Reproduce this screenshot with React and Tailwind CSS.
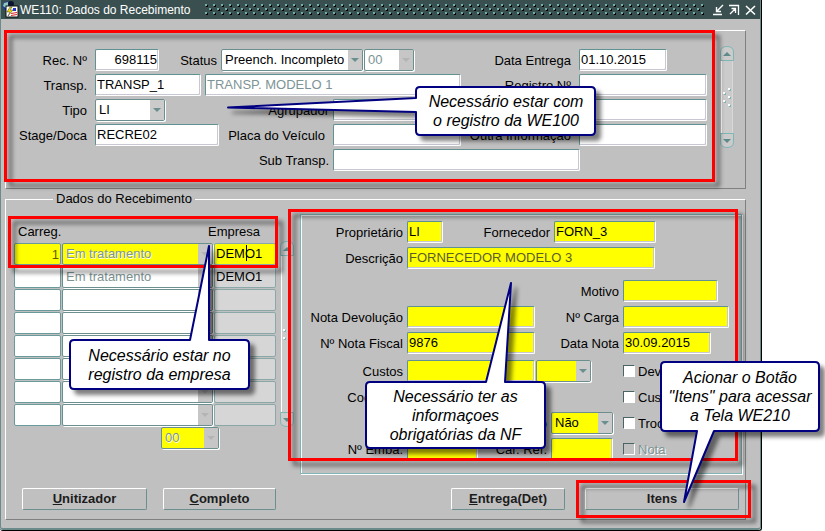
import React from "react";
import clsx from "clsx";

const loads = [
  { load: "1", status: "Em tratamento", company: "DEMO1", active: true },
  { load: "", status: "Em tratamento", company: "DEMO1" },
  { load: "", status: "", company: "" },
  { load: "", status: "", company: "" },
  { load: "", status: "", company: "" },
  { load: "", status: "", company: "" },
  { load: "", status: "", company: "" },
  { load: "", status: "", company: "" },
];

const edge = "border border-t-[#5f9290] border-l-[#5f9290] border-b-white border-r-white rounded-[2px]";

function Field({ id, label, labelClass, className, yellow, value = "", readOnly, muted, tight }) {
  return (
    <>
      {label && (
        <label
          htmlFor={id}
          className={clsx("shrink-0 pt-1 text-right whitespace-nowrap", tight ? "pr-1" : "pr-2", labelClass)}
        >
          {label}
        </label>
      )}
      <input
        id={id}
        aria-label={label ? undefined : id}
        defaultValue={value}
        readOnly={readOnly}
        className={clsx(
          "h-[22px] shrink-0 px-px pb-0.5 shadow-[inset_-1px_-1px_0_#c8c8d4] outline-none",
          edge,
          yellow ? "bg-[#ffff00]" : "bg-white",
          muted,
          className
        )}
      />
    </>
  );
}

function Select({ id, label, labelClass, className, bg = "bg-white", value, disabled, flat }) {
  return (
    <>
      {label && (
        <label htmlFor={id} className={clsx("shrink-0 pt-1 text-right whitespace-nowrap", labelClass)}>
          {label}
        </label>
      )}
      <span className={clsx("relative block h-[22px] shrink-0", className)}>
        <select
          id={id}
          aria-label={label ? undefined : id}
          disabled={disabled}
          defaultValue={value}
          className={clsx(
            "block h-full w-full appearance-none rounded-[2px] border border-[#6b8f8f] pl-[3px] opacity-100 shadow-[1px_1px_0_#fff] outline-none",
            bg,
            disabled && "text-[#7d9494] [text-shadow:1px_1px_0_#fff]"
          )}
        >
          <option>{value}</option>
        </select>
        <span
          className={clsx(
            "pointer-events-none absolute top-px right-px bottom-px flex w-[14px] items-center justify-center",
            flat ? "bg-[#c6c6c6]" : "bg-[#cbcbcb]"
          )}
        >
          <svg width="8" height="4" viewBox="0 0 8 4" className={disabled ? "fill-[#b4b4b4]" : "fill-[#6b8f8f]"}>
            <path d="M0 0H8L4 4Z" />
          </svg>
        </span>
      </span>
    </>
  );
}

function Check({ id, label, disabled }) {
  return (
    <span className="flex items-center gap-[3px] pl-1">
      <input
        id={id}
        type="checkbox"
        disabled={disabled}
        className={clsx(
          "size-3 shrink-0 appearance-none border border-t-[#4a6464] border-l-[#4a6464] border-b-white border-r-white",
          disabled ? "bg-[#c0c0c0]" : "bg-white"
        )}
      />
      <label htmlFor={id} className={clsx("pt-0.5", disabled && "text-[#7d9494] [text-shadow:1px_1px_0_#fff]")}>
        {label}
      </label>
    </span>
  );
}

function ScrollBar({ className }) {
  return (
    <div className={clsx("flex w-[14px] shrink-0 flex-col", className)}>
      <svg width="14" height="15" viewBox="0 0 14 15" fill="none">
        <path d="M.5 14.5V6Q.5 .5 7 .5T13.5 6V14.5Z" fill="#cbcbcb" stroke="#7fb5b5" />
        <path d="M3 10H11L7 6Z" fill="#5f8a8a" />
      </svg>
      <div className="mx-px flex flex-1 items-center justify-center border-x border-l-white border-r-[#d8d8d8] bg-[#cbcbcb]">
        <svg width="8" height="19" viewBox="0 0 8 19">
          {[[5, 0], [0, 4], [5, 8], [0, 12], [5, 16]].map(([x, y]) => (
            <g key={y}>
              <rect x={x + 1} y={y + 1} width="2" height="2" fill="#7fb5b5" />
              <rect x={x} y={y} width="2" height="2" fill="#fff" />
            </g>
          ))}
        </svg>
      </div>
      <svg width="14" height="15" viewBox="0 0 14 15" fill="none">
        <path d="M.5 .5V9Q.5 14.5 7 14.5T13.5 9V.5Z" fill="#cbcbcb" stroke="#7fb5b5" />
        <path d="M3 6H11L7 10Z" fill="#5f8a8a" />
      </svg>
    </div>
  );
}

function Button({ children, className }) {
  return (
    <button
      type="button"
      className={clsx(
        "h-[22px] shrink-0 rounded-[2px] border border-t-white border-l-white border-b-[#6b8f8f] border-r-[#6b8f8f] bg-[#c0c0c0] font-bold text-[#1c1c1c]",
        className
      )}
    >
      {children}
    </button>
  );
}

function TitleBar() {
  return (
    <header className="flex h-[19px] items-center bg-[#3a5050] pr-1 pl-px text-white">
      <svg width="17" height="17" viewBox="0 0 17 17" className="shrink-0">
        <circle cx="5" cy="5" r="4.5" fill="#1d3f9a" />
        <path d="M2 2L6 1L7 4L4 7L1 5Z" fill="#8fc8c0" />
        <circle cx="9" cy="3" r="3" fill="#0b1330" />
        <rect x="4" y="5" width="12" height="11" fill="#fff" stroke="#111" />
        <path d="M8 6L5 11H8L6 15L11 9H8L10 6Z" fill="#f4e400" stroke="#333" strokeWidth=".5" />
        <path d="M11 7H14V10H11Z" fill="#2237c8" />
        <path d="M9 12L15 11V14L9 15Z" fill="#d22" />
        <path d="M9 13.5L15 12.5" stroke="#fff" />
      </svg>
      <h1 className="pl-px text-[12px] whitespace-nowrap">WE110: Dados do Recebimento</h1>
      <svg className="ml-[14px] h-3 min-w-0 flex-1">
        <defs>
          <pattern id="grip" width="8" height="8" patternUnits="userSpaceOnUse">
            <rect x="1" y="1" width="2" height="2" fill="#000" />
            <rect x="0" y="0" width="2" height="2" fill="#6fb0ac" />
            <rect x="5" y="5" width="2" height="2" fill="#000" />
            <rect x="4" y="4" width="2" height="2" fill="#6fb0ac" />
          </pattern>
        </defs>
        <rect width="100%" height="100%" fill="url(#grip)" />
      </svg>
      <div className="ml-2 flex shrink-0 gap-1">
        <button type="button" aria-label="Minimizar">
          <svg width="12" height="12" viewBox="0 0 12 12" fill="none" stroke="#fff">
            <path d="M11 1L5 7M4.5 3V7.5H9M1 10.5H10" strokeWidth="1.4" />
          </svg>
        </button>
        <button type="button" aria-label="Maximizar">
          <svg width="12" height="12" viewBox="0 0 12 12" fill="none" stroke="#fff">
            <path d="M1 1.5H10.5V11M2 10L7.5 4.5M3.5 4.5H7.5V9" strokeWidth="1.3" />
          </svg>
        </button>
        <button type="button" aria-label="Fechar">
          <svg width="12" height="12" viewBox="0 0 12 12" fill="none" stroke="#fff">
            <path d="M2 2L11 10.5M11 2L2 10.5" strokeWidth="1.6" />
          </svg>
        </button>
      </div>
    </header>
  );
}

function HeaderPanel() {
  return (
    <section className="flex justify-between border border-t-white border-l-white border-b-[#808080] border-r-[#808080] pr-[11px] pb-[17px]">
      <div className="mt-[18px] flex flex-col gap-[3px]">
        <div className="flex">
          <Field id="rec" label="Rec. Nº" labelClass="w-[89px]" className="w-16 text-right" value="698115" />
          <Select id="status" label="Status" labelClass="w-[62px] pr-1" className="w-[142px]" value="Preench. Incompleto" />
          <Select id="statusCode" className="ml-px w-[50px]" value="00" disabled flat />
          <Field id="entrega" label="Data Entrega" labelClass="ml-auto" className="mr-10 w-[88px]" value="01.10.2015" />
        </div>
        <div className="flex">
          <Field id="transp" label="Transp." labelClass="w-[89px]" className="w-[106px]" value="TRANSP_1" />
          <Field id="transpNome" className="ml-1 w-64" muted="text-[#7d9494]" value="TRANSP. MODELO 1" readOnly />
          <Field id="registro" label="Registro Nº" labelClass="w-[118px]" className="w-32" />
        </div>
        <div className="flex">
          <Select id="tipo" label="Tipo" labelClass="w-[89px] pr-2" className="w-[70px]" value="LI" />
          <Field id="agrupador" label="Agrupador" tight labelClass="w-[168px]" className="w-32" />
          <Field id="registro2" className="ml-auto w-32" />
        </div>
        <div className="flex">
          <Field id="doca" label="Stage/Doca" labelClass="w-[89px]" className="w-[124px]" value="RECRE02" />
          <Field id="placa" label="Placa do Veículo" labelClass="w-[114px]" className="w-32" />
          <Field id="outra" label="Outra Informação" labelClass="ml-auto" className="w-32" />
        </div>
        <div className="flex">
          <Field id="subTransp" label="Sub Transp." tight labelClass="w-[327px]" className="w-[247px]" />
        </div>
      </div>
      <ScrollBar className="mt-[15px] h-[102px]" />
    </section>
  );
}

function LoadTable() {
  return (
    <div>
      <div className="flex gap-1">
        <table className="border-collapse">
          <thead>
            <tr className="h-[22px] text-left align-middle">
              <th className="pl-1 font-normal">Carreg.</th>
              <th className="pr-4 text-right font-normal" colSpan={2}>Empresa</th>
            </tr>
          </thead>
          <tbody>
            {loads.map((row, i) => (
              <tr key={i} className="h-[23px] align-top">
                <td className="w-12 p-0">
                  <input
                    aria-label={`Carreg. ${i + 1}`}
                    defaultValue={row.load}
                    className={clsx(
                      "block h-[22px] w-[47px] rounded-[2px] border border-[#6b9a9a] px-px text-right text-[#5c5c00]",
                      row.active ? "bg-[#ffff00]" : "bg-white"
                    )}
                  />
                </td>
                <td className="w-[152px] p-0">
                  <Select
                    id={`Status ${i + 1}`}
                    className="w-[151px]"
                    bg={row.active ? "bg-[#ffff00]" : "bg-white"}
                    value={row.status}
                    disabled
                    flat
                  />
                </td>
                <td className="relative p-0">
                  <input
                    aria-label={`Empresa ${i + 1}`}
                    defaultValue={row.company}
                    className={clsx(
                      "block h-[22px] w-[62px] rounded-[2px] border border-[#8aa8a8] px-px pb-0.5",
                      row.active ? "bg-[#ffff00]" : "bg-[#d6d6d6]"
                    )}
                  />
                  {/* text caret */}
                  {row.active && <span className="absolute top-0.5 left-8 h-4 w-px bg-black" />}
                </td>
              </tr>
            ))}
          </tbody>
        </table>
        <ScrollBar className="mt-5" />
      </div>
      <div className="ml-[147px] flex">
        <Select id="codigo" className="w-[58px]" bg="bg-[#ffff00]" value="00" disabled flat />
      </div>
    </div>
  );
}

function InvoicePanel() {
  const label = "w-[106px]";
  return (
    <section className="h-[260px] w-[442px] shrink-0 border border-[#7fb5b5] shadow-[inset_1px_1px_0_#fff,1px_1px_0_#fff]">
      <div className="flex flex-col gap-1 pt-[6px]">
        <div className="flex">
          <Field id="prop" label="Proprietário" tight labelClass={label} className="w-9" yellow value="LI" />
          <Field id="forn" label="Fornecedor" tight labelClass="w-[111px]" className="w-[102px]" yellow value="FORN_3" />
        </div>
        <div className="flex">
          <Field id="desc" label="Descrição" tight labelClass={label} className="w-[248px]" yellow muted="text-[#5c5c2a]" value="FORNECEDOR MODELO 3" />
        </div>
      </div>
      <div className="mt-[11px] flex flex-col gap-1">
        <div className="flex">
          <Field id="motivo" label="Motivo" tight labelClass="w-[322px]" className="w-[95px]" yellow />
        </div>
        <div className="flex">
          <Field id="devolucao" label="Nota Devolução" tight labelClass={label} className="w-32" yellow />
          <Field id="carga" label="Nº Carga" tight labelClass="w-[88px]" className="w-[106px]" yellow />
        </div>
        <div className="flex">
          <Field id="fiscal" label="Nº Nota Fiscal" tight labelClass={label} className="w-32" yellow value="9876" />
          <Field id="dataNota" label="Data Nota" tight labelClass="w-[88px]" className="w-[88px]" yellow value="30.09.2015" />
        </div>
      </div>
      <div className="mt-[6px] flex flex-col gap-1">
        <div className="flex">
          <Field id="custos" label="Custos" tight labelClass={label} className="w-32" yellow />
          <Select id="custosTipo" className="mr-7 ml-px w-[55px]" bg="bg-[#ffff00]" value="" />
          <Check id="dev" label="Dev." />
        </div>
        <div className="flex">
          <Field id="cod" label="Cod. Loja" tight labelClass={label} className="mr-[84px] w-32" yellow />
          <Check id="cus" label="Cus" />
        </div>
        <div className="flex">
          <Select id="bonif" label="Tipo" labelClass="w-[250px] pr-1" className="mr-1.5 w-[62px]" bg="bg-[#ffff00]" value="Não" />
          <Check id="troca" label="Troc" />
        </div>
        <div className="flex">
          <Field id="emba" label="Nº Emba." tight labelClass={label} className="w-[71px]" yellow />
          <Field id="ref" label="Car. Ref." tight labelClass="w-[73px]" className="mr-1.5 w-[62px]" yellow />
          <Check id="nota" label="Nota" disabled />
        </div>
      </div>
    </section>
  );
}

function Frame({ className }) {
  return (
    <div
      className={clsx(
        "pointer-events-none absolute border-[3px] border-[#ff0000] drop-shadow-[5px_5px_2px_rgba(0,0,0,0.5)]",
        className
      )}
    />
  );
}

// Speech bubble: outline is one path, text sits in the box part of it
function Callout({ className, textClass, width, height, path, children }) {
  return (
    <div className={clsx("pointer-events-none absolute", className)}>
      <svg
        width={width}
        height={height}
        viewBox={`0 0 ${width} ${height}`}
        className="overflow-visible drop-shadow-[5px_5px_2px_rgba(0,0,0,0.5)]"
      >
        <path d={path} fill="#fff" stroke="#000080" strokeWidth="2" strokeLinejoin="round" />
      </svg>
      <p
        className={clsx(
          "absolute flex items-center justify-center text-center text-[16px] leading-[19px] whitespace-pre italic",
          textClass
        )}
      >
        {children}
      </p>
    </div>
  );
}

export default function App() {
  return (
    <div className="relative min-h-screen bg-white font-['Liberation_Sans',Arial,sans-serif] text-[13px] leading-4 text-black">
      <main className="mr-[63px] rounded-b-[3px] border-r border-b border-black">
        <div className="rounded-b-[3px] border-x border-b-2 border-[#6b8a8a] bg-[#c0c0c0]">
          <TitleBar />
          <div className="pt-[11px] pr-[14px] pb-2 pl-1">
            <HeaderPanel />
            <fieldset className="mt-[2px] border border-t-white border-l-white border-b-[#808080] border-r-[#808080]">
              <legend className="ml-[47px] px-[3px]">Dados do Recebimento</legend>
              <div className="flex justify-between pt-[7px] pr-[3px] pl-2">
                <div className="pt-[7px]">
                  <LoadTable />
                </div>
                <InvoicePanel />
              </div>
              <div className="flex gap-4 pt-[14px] pr-[6px] pb-[9px] pl-4">
                <Button className="w-[125px]"><u>U</u>nitizador</Button>
                <Button className="w-[113px]"><u>C</u>ompleto</Button>
                <Button className="ml-auto w-[114px]"><u>E</u>ntrega(Det)</Button>
                <Button className="ml-1 w-[154px]">Itens</Button>
              </div>
            </fieldset>
          </div>
        </div>
      </main>

      <Frame className="top-[30px] left-1 h-[152px] w-[711px]" />
      <Frame className="top-[216px] left-2 h-[52px] w-[270px]" />
      <Frame className="top-[209px] left-[288px] h-[252px] w-[450px]" />
      <Frame className="top-[480px] left-[576px] h-[38px] w-[175px]" />

      <Callout
        className="top-[87px] left-[228px]"
        width={368}
        height={49}
        path="M192 0H363Q367 0 367 4V44Q367 48 363 48H192Q188 48 188 44V25L0 20.500L188 11V4Q188 0 192 0Z"
        textClass="top-0 right-0 h-12 w-[180px]"
      >
        {"Necessário estar com\no registro da WE100"}
      </Callout>
      <Callout
        className="top-[245px] left-[69px]"
        width={181}
        height={145}
        path="M5 95H121L140 1V95H176Q180 95 180 99V140Q180 144 176 144H5Q1 144 1 140V99Q1 95 5 95Z"
        textClass="top-24 left-0 h-12 w-full"
      >
        {"Necessário estar no\nregistro da empresa"}
      </Callout>
      <Callout
        className="top-[282px] left-[365px]"
        width={181}
        height={167}
        path="M5 100H121L146 1L140 100H176Q180 100 180 104V162Q180 166 176 166H5Q1 166 1 162V104Q1 100 5 100Z"
        textClass="top-[100px] left-0 h-[66px] w-full"
      >
        {"Necessário ter as\ninformaçoes\nobrigatórias da NF"}
      </Callout>
      <Callout
        className="top-[361px] left-[660px]"
        width={160}
        height={141}
        path="M5 1H155Q159 1 159 5V66Q159 70 155 70H54L24 141L37 70H5Q1 70 1 66V5Q1 1 5 1Z"
        textClass="top-0 left-0 h-[71px] w-full"
      >
        {"Acionar o Botão\n\"Itens\" para acessar\na Tela WE210"}
      </Callout>
    </div>
  );
}
